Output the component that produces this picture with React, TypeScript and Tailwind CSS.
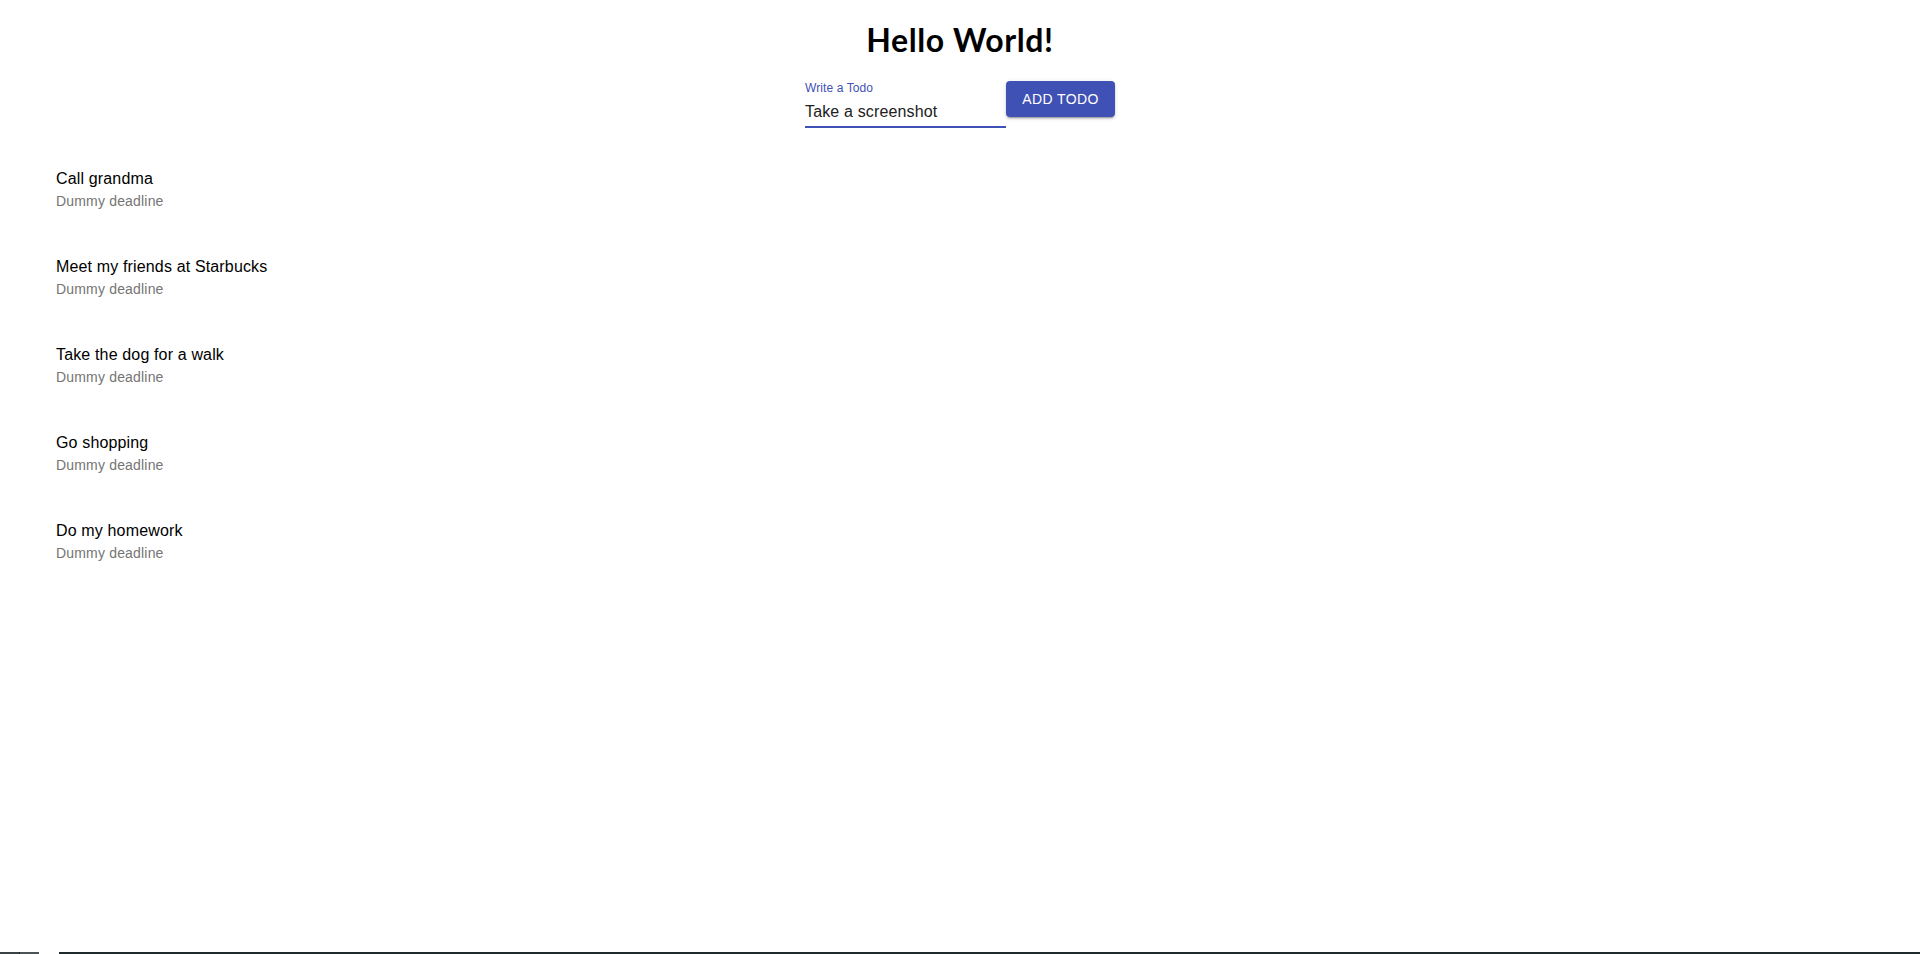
import React from "react";

const todos = [
  "Call grandma",
  "Meet my friends at Starbucks",
  "Take the dog for a walk",
  "Go shopping",
  "Do my homework",
];

export default function App() {
  return (
    <div className="h-[954px] w-full bg-white flex flex-col overflow-hidden" style={{ fontFamily: "'Liberation Sans', Arial, sans-serif" }}>
      <div className="flex flex-col items-center">
        <h1 className="pt-[20px] text-[32px] leading-[40px] font-bold tracking-[0.6px] text-black" style={{ fontFamily: "Lato, 'Open Sans', sans-serif" }}>
          Hello World!
        </h1>
        <div className="mt-[21px] flex items-start">
          <div className="w-[201px] flex flex-col">
            <label className="text-[12px] leading-[14px] tracking-[0.1px] text-[#3f51b5]">Write a Todo</label>
            <div className="pt-[7px] pb-[5px] border-b-2 border-[#3f51b5] text-[16px] leading-[19px] tracking-[0.15px] text-[#212121]">
              Take a screenshot
            </div>
          </div>
          <button className="h-[36px] w-[109px] rounded-[4px] bg-[#3f51b5] text-white text-[14px] font-normal tracking-[0.4px] uppercase shadow-[0_3px_1px_-2px_rgba(0,0,0,0.2),0_2px_2px_0_rgba(0,0,0,0.14),0_1px_5px_0_rgba(0,0,0,0.12)]">
            Add Todo
          </button>
        </div>
      </div>
      <ul className="mt-[39px] px-[40px] flex flex-col gap-[44px]">
        {todos.map((t) => (
          <li key={t} className="px-4 flex flex-col">
            <span className="text-[16px] leading-[24px] tracking-[0.15px] text-black">{t}</span>
            <span className="text-[14px] leading-[20px] tracking-[0.18px] text-[#757575]">Dummy deadline</span>
          </li>
        ))}
      </ul>
      <div className="mt-auto h-[2px] w-full flex bg-[#1e2a2b]">
        <div className="w-[19px] bg-[#3b4344]" />
        <div className="w-[1px]" />
        <div className="w-[19px] bg-[#4c5455]" />
        <div className="w-[20px] bg-white" />
      </div>
    </div>
  );
}
